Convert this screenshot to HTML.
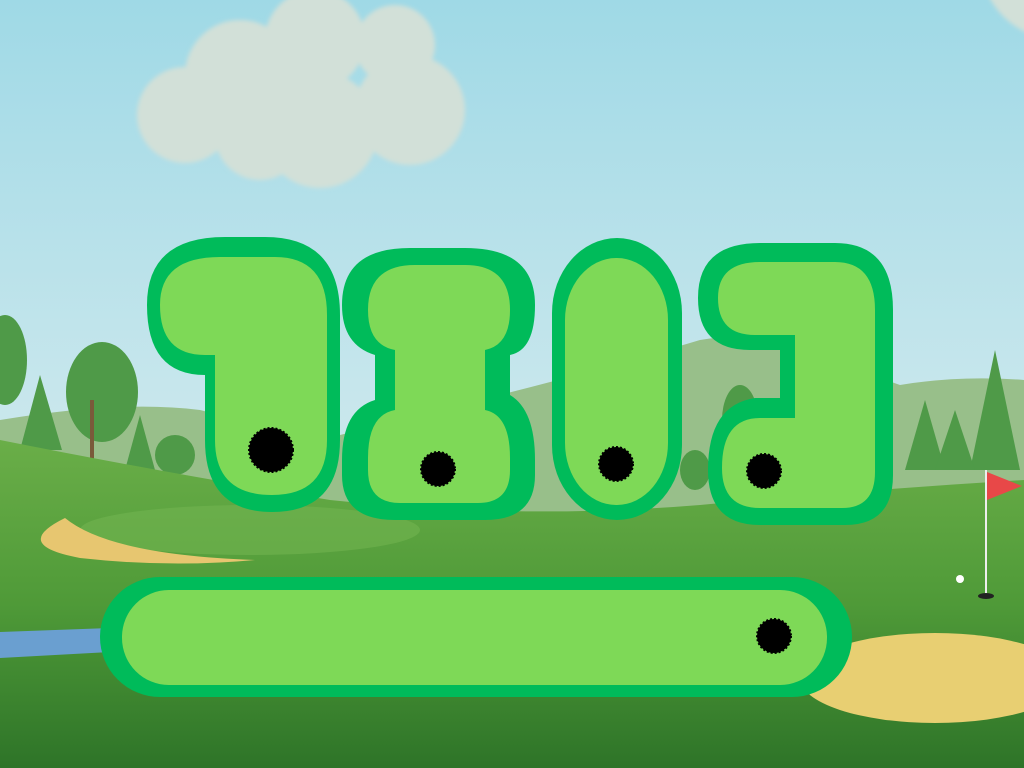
<!DOCTYPE html>
<html><head><meta charset="utf-8"><style>
html,body{margin:0;padding:0;width:1024px;height:768px;overflow:hidden}
svg{display:block}
</style></head><body>
<svg width="1024" height="768" viewBox="0 0 1024 768" xmlns="http://www.w3.org/2000/svg">
<defs>
<linearGradient id="sky" x1="0" y1="0" x2="0" y2="1">
<stop offset="0" stop-color="#9fd9e6"/><stop offset="0.5" stop-color="#c6e6ec"/><stop offset="1" stop-color="#e3f0ef"/>
</linearGradient>
<linearGradient id="grass" x1="0" y1="0" x2="0" y2="1">
<stop offset="0" stop-color="#6aae48"/><stop offset="0.5" stop-color="#4f9a38"/><stop offset="1" stop-color="#2e7428"/>
</linearGradient>
<filter id="bl"><feGaussianBlur stdDeviation="2"/></filter>
</defs>
<rect width="1024" height="768" fill="url(#sky)"/>
<g fill="#d2e0d8" filter="url(#bl)">
<circle cx="240" cy="75" r="55"/><circle cx="315" cy="40" r="50"/><circle cx="395" cy="45" r="40"/><circle cx="410" cy="110" r="55"/><circle cx="320" cy="130" r="58"/><circle cx="185" cy="115" r="48"/><circle cx="260" cy="135" r="45"/>
<circle cx="1060" cy="-40" r="80"/>
</g>
<path d="M0 420 Q120 400 200 410 L320 440 L480 400 Q600 370 700 340 Q760 330 800 350 L900 385 Q960 375 1024 380 L1024 520 L0 520Z" fill="#98bf8a"/>
<g fill="#4f9a48">
<ellipse cx="102" cy="392" rx="36" ry="50"/><ellipse cx="5" cy="360" rx="22" ry="45"/><ellipse cx="175" cy="455" rx="20" ry="20"/>
<path d="M20 450 L40 375 L62 450Z"/><path d="M125 470 L140 415 L155 470Z"/>
<path d="M970 470 L995 350 L1020 470Z"/><path d="M905 470 L925 400 L945 470Z"/><path d="M935 470 L955 410 L975 470Z"/>
<ellipse cx="740" cy="420" rx="18" ry="35"/><ellipse cx="695" cy="470" rx="15" ry="20"/>
</g>
<rect x="90" y="400" width="4" height="65" fill="#7a5a3a"/>
<path d="M0 440 Q150 470 330 500 Q520 520 700 505 Q860 490 1024 480 L1024 768 L0 768Z" fill="url(#grass)"/>
<ellipse cx="250" cy="530" rx="170" ry="25" fill="#72b450" opacity="0.6"/>
<path d="M65 518 Q10 545 80 558 Q170 568 255 560 Q110 555 65 518Z" fill="#e7c670"/>
<path d="M0 632 L110 628 L110 652 L0 658Z" fill="#6a9fd0"/>
<ellipse cx="935" cy="678" rx="135" ry="45" fill="#e8cf72"/>
<rect x="985" y="470" width="2" height="125" fill="#eee"/>
<path d="M987 472 L1022 486 L987 500Z" fill="#e84848"/>
<ellipse cx="986" cy="596" rx="8" ry="3" fill="#222"/>
<circle cx="960" cy="579" r="4" fill="#fff"/>
<g fill="#00bb5a">
<path d="M225 237 L265 237 Q340 237 340 315 L340 440 Q340 512 272 512 Q205 512 205 440 L205 375 L205 375 Q147 375 147 305 Q147 237 225 237Z"/>
<path d="M410 248 L465 248 Q535 248 535 305 Q535 350 510 355 L510 395 Q535 410 535 460 L535 475 Q535 520 485 520 L395 520 Q342 520 342 475 L342 460 Q342 410 375 400 L375 355 Q342 345 342 305 Q342 248 410 248Z"/>
<rect x="552" y="238" width="130" height="282" rx="65" ry="75"/>
<path d="M760 243 L835 243 Q893 243 893 310 L893 475 Q893 525 845 525 L760 525 Q708 525 708 470 Q708 405 755 398 L780 398 L780 350 L750 350 Q698 350 698 298 Q698 243 760 243Z"/>
<rect x="100" y="577" width="752" height="120" rx="60" ry="60"/>
</g>
<g fill="#7ed957">
<path d="M220 257 L275 257 Q327 257 327 315 L327 440 Q327 495 272 495 Q215 495 215 440 L215 355 L205 355 Q160 355 160 305 Q160 257 220 257Z"/>
<path d="M415 265 L465 265 Q510 265 510 310 Q510 345 485 350 L485 410 Q510 415 510 458 L510 470 Q510 503 478 503 L400 503 Q368 503 368 470 L368 458 Q368 415 395 410 L395 350 Q368 345 368 310 Q368 265 415 265Z"/>
<rect x="565" y="258" width="103" height="247" rx="51" ry="62"/>
<path d="M760 262 L835 262 Q875 262 875 310 L875 472 Q875 508 842 508 L760 508 Q722 508 722 468 Q722 418 760 418 L795 418 L795 335 L755 335 Q718 335 718 298 Q718 262 760 262Z"/>
<rect x="122" y="590" width="705" height="95" rx="47" ry="47"/>
</g>
<g fill="#000" stroke="#000" stroke-width="2" stroke-dasharray="2 2">
<circle cx="271" cy="450" r="22"/><circle cx="438" cy="469" r="17"/><circle cx="616" cy="464" r="17"/><circle cx="764" cy="471" r="17"/><circle cx="774" cy="636" r="17"/>
</g>
</svg>
</body></html>
